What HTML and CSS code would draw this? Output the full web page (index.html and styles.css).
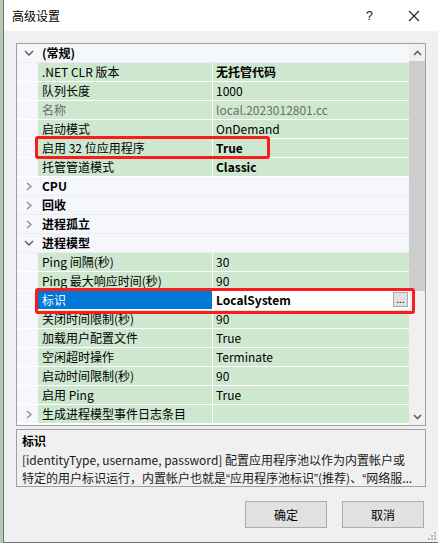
FILE: index.html
```html
<!DOCTYPE html>
<html lang="zh">
<head>
<meta charset="utf-8">
<link rel="stylesheet" href="styles.css">
</head>
<body>
<div class="window">
  <div class="titlebar">
    <span class="title">高级设置</span>
    <span class="help">?</span>
    <svg class="close" width="12" height="12" viewBox="0 0 12 12"><path d="M1 1L11 11M11 1L1 11" stroke="#222" stroke-width="1.1" fill="none"/></svg>
  </div>
  <div class="content">
    <div class="grid">
      <div class="rows">
        <div class="row cat"><span class="mg"><svg width="10" height="6" viewBox="0 0 10 6"><path d="M1 1L5 5L9 1" stroke="#555" stroke-width="1.3" fill="none"/></svg></span><span class="cname">(常规)</span></div>
        <div class="row"><span class="mg"></span><span class="name">.NET CLR 版本</span><span class="val b">无托管代码</span></div>
        <div class="row"><span class="mg"></span><span class="name">队列长度</span><span class="val">1000</span></div>
        <div class="row dis"><span class="mg"></span><span class="name">名称</span><span class="val">local.2023012801.cc</span></div>
        <div class="row"><span class="mg"></span><span class="name">启动模式</span><span class="val">OnDemand</span></div>
        <div class="row"><span class="mg"></span><span class="name">启用 32 位应用程序</span><span class="val b">True</span></div>
        <div class="row"><span class="mg"></span><span class="name">托管管道模式</span><span class="val b">Classic</span></div>
        <div class="row cat"><span class="mg"><svg width="6" height="9" viewBox="0 0 6 9"><path d="M1 1L5 4.5L1 8" stroke="#8a8a8a" stroke-width="1.3" fill="none"/></svg></span><span class="cname">CPU</span></div>
        <div class="row cat"><span class="mg"><svg width="6" height="9" viewBox="0 0 6 9"><path d="M1 1L5 4.5L1 8" stroke="#8a8a8a" stroke-width="1.3" fill="none"/></svg></span><span class="cname">回收</span></div>
        <div class="row cat"><span class="mg"><svg width="6" height="9" viewBox="0 0 6 9"><path d="M1 1L5 4.5L1 8" stroke="#8a8a8a" stroke-width="1.3" fill="none"/></svg></span><span class="cname">进程孤立</span></div>
        <div class="row cat"><span class="mg"><svg width="10" height="6" viewBox="0 0 10 6"><path d="M1 1L5 5L9 1" stroke="#555" stroke-width="1.3" fill="none"/></svg></span><span class="cname">进程模型</span></div>
        <div class="row"><span class="mg"></span><span class="name">Ping 间隔(秒)</span><span class="val">30</span></div>
        <div class="row"><span class="mg"></span><span class="name">Ping 最大响应时间(秒)</span><span class="val">90</span></div>
        <div class="row sel"><span class="mg"></span><span class="name">标识</span><span class="val b">LocalSystem<span class="dots">...</span></span></div>
        <div class="row"><span class="mg"></span><span class="name">关闭时间限制(秒)</span><span class="val">90</span></div>
        <div class="row"><span class="mg"></span><span class="name">加载用户配置文件</span><span class="val">True</span></div>
        <div class="row"><span class="mg"></span><span class="name">空闲超时操作</span><span class="val">Terminate</span></div>
        <div class="row"><span class="mg"></span><span class="name">启动时间限制(秒)</span><span class="val">90</span></div>
        <div class="row"><span class="mg"></span><span class="name">启用 Ping</span><span class="val">True</span></div>
        <div class="row"><span class="mg"><svg width="6" height="9" viewBox="0 0 6 9"><path d="M1 1L5 4.5L1 8" stroke="#8a8a8a" stroke-width="1.3" fill="none"/></svg></span><span class="name">生成进程模型事件日志条目</span><span class="val"></span></div>
      </div>
      <div class="scroll">
        <div class="arrow"><svg width="9" height="6" viewBox="0 0 9 6"><path d="M1 5L4.5 1.5L8 5" stroke="#606060" stroke-width="1.6" fill="none"/></svg></div>
        <div class="thumb"></div>
        <div class="track"></div>
        <div class="arrow"><svg width="9" height="6" viewBox="0 0 9 6"><path d="M1 1L4.5 4.5L8 1" stroke="#606060" stroke-width="1.6" fill="none"/></svg></div>
      </div>
    </div>
    <div class="desc">
      <div class="dtitle">标识</div>
      <div class="dline">[identityType, username, password] 配置应用程序池以作为内置帐户或</div>
      <div class="dline">特定的用户标识运行，内置帐户也就是<span class="q">“</span>应用程序池标识<span class="q">”</span>(推荐)、<span class="q">“</span>网络服...</div>
    </div>
    <div class="buttons">
      <button class="btn">确定</button>
      <button class="btn">取消</button>
    </div>
  </div>
  <svg class="grip" width="8" height="8" viewBox="0 0 8 8"><g fill="#b8b8b8"><rect x="6" y="0" width="2" height="2"/><rect x="3" y="3" width="2" height="2"/><rect x="6" y="3" width="2" height="2"/><rect x="0" y="6" width="2" height="2"/><rect x="3" y="6" width="2" height="2"/><rect x="6" y="6" width="2" height="2"/></g></svg>
  <div class="mark mark1"></div>
  <div class="mark mark2"></div>
</div>
</body>
</html>
```

FILE: styles.css
```css
html, body {
  margin: 0;
  padding: 0;
  background: #b5cbb5;
}
body {
  font-family: "Noto Sans CJK SC", "Noto Sans", sans-serif;
  font-size: 12px;
  color: #000;
}
.window {
  position: relative;
  margin-left: 3px;
  width: 435px;
  height: 543px;
  box-sizing: border-box;
  border-left: 1px solid #6e6e6e;
  border-bottom: 1px solid #6e6e6e;
  background: #f0f0f0;
  display: flex;
  flex-direction: column;
}
.titlebar {
  height: 31px;
  background: #fff;
  display: flex;
  align-items: center;
  padding-left: 8px;
  flex: none;
}
.title {
  font-size: 12px;
  flex: 1;
}
.help {
  font-family: "Liberation Sans", sans-serif;
  font-size: 13px;
  margin-right: 35px;
  color: #222;
}
.close {
  margin-right: 18px;
}
.content {
  padding: 12px 8px 0 12px;
  display: flex;
  flex-direction: column;
}
.grid {
  width: 410px;
  height: 383px;
  box-sizing: border-box;
  border: 1px solid #a0a0a0;
  display: flex;
  background: #f5f7fc;
}
.rows {
  width: 392px;
  display: flex;
  flex-direction: column;
}
.row {
  height: 18px;
  border-bottom: 1px solid #fff;
  display: flex;
  align-items: center;
  line-height: 18px;
  white-space: nowrap;
}
.row.cat {
  border-bottom-color: #e9ecf1;
  background: #f5f7fc;
}
.mg {
  width: 21px;
  height: 18px;
  flex: none;
  display: flex;
  align-items: center;
  justify-content: center;
  padding-left: 2px;
  box-sizing: border-box;
}
.cname {
  font-weight: bold;
  padding-left: 4px;
}
.name {
  width: 175px;
  height: 18px;
  flex: none;
  background: #cde8cf;
  border-right: 1px solid #fff;
  padding-left: 4px;
  box-sizing: border-box;
}
.val {
  flex: 1;
  height: 18px;
  background: #cde8cf;
  padding-left: 3px;
  display: flex;
  align-items: center;
}
.b { font-weight: bold; }
.dis .name, .dis .val { color: #6d6d6d; }
.sel .name {
  background: #0078d7;
  color: #fff;
}
.sel .val {
  background: #fff;
  position: relative;
}
.dots {
  position: absolute;
  right: 1px;
  top: 1px;
  width: 15px;
  height: 15px;
  box-sizing: border-box;
  border: 1px solid #adadad;
  background: #e1e1e1;
  font-weight: normal;
  font-size: 10px;
  line-height: 12px;
  text-align: center;
}
.scroll {
  width: 16px;
  background: #f0f0f0;
  display: flex;
  flex-direction: column;
}
.arrow {
  height: 17px;
  display: flex;
  align-items: center;
  justify-content: center;
}
.thumb {
  height: 230px;
  background: #cdcdcd;
}
.track { flex: 1; }
.desc {
  margin-top: 3px;
  width: 410px;
  height: 58px;
  box-sizing: border-box;
  border: 1px solid #a0a0a0;
  padding: 2px 5px 0 5px;
  line-height: 18.5px;
}
.dtitle { font-weight: bold; }
.dline {
  white-space: nowrap;
  overflow: hidden;
  color: #1a1a1a;
}
.q {
  font-family: "Liberation Sans", sans-serif;
}
.buttons {
  margin-top: 14px;
  display: flex;
  justify-content: flex-end;
  gap: 15px;
  padding-right: 2px;
  width: 410px;
  box-sizing: border-box;
}
.btn {
  width: 82px;
  height: 27px;
  background: #e1e1e1;
  border: 1px solid #adadad;
  font-family: "Noto Sans CJK SC", sans-serif;
  font-size: 12px;
  color: #000;
  padding: 0;
}
.grip {
  position: absolute;
  right: 2px;
  bottom: 2px;
}
.mark {
  position: absolute;
  border: 3px solid #fa1c1c;
  border-radius: 3px;
  box-sizing: border-box;
}
.mark1 {
  left: 31px;
  top: 136px;
  width: 235px;
  height: 23px;
}
.mark2 {
  left: 31px;
  top: 288px;
  width: 380px;
  height: 26px;
}
```
